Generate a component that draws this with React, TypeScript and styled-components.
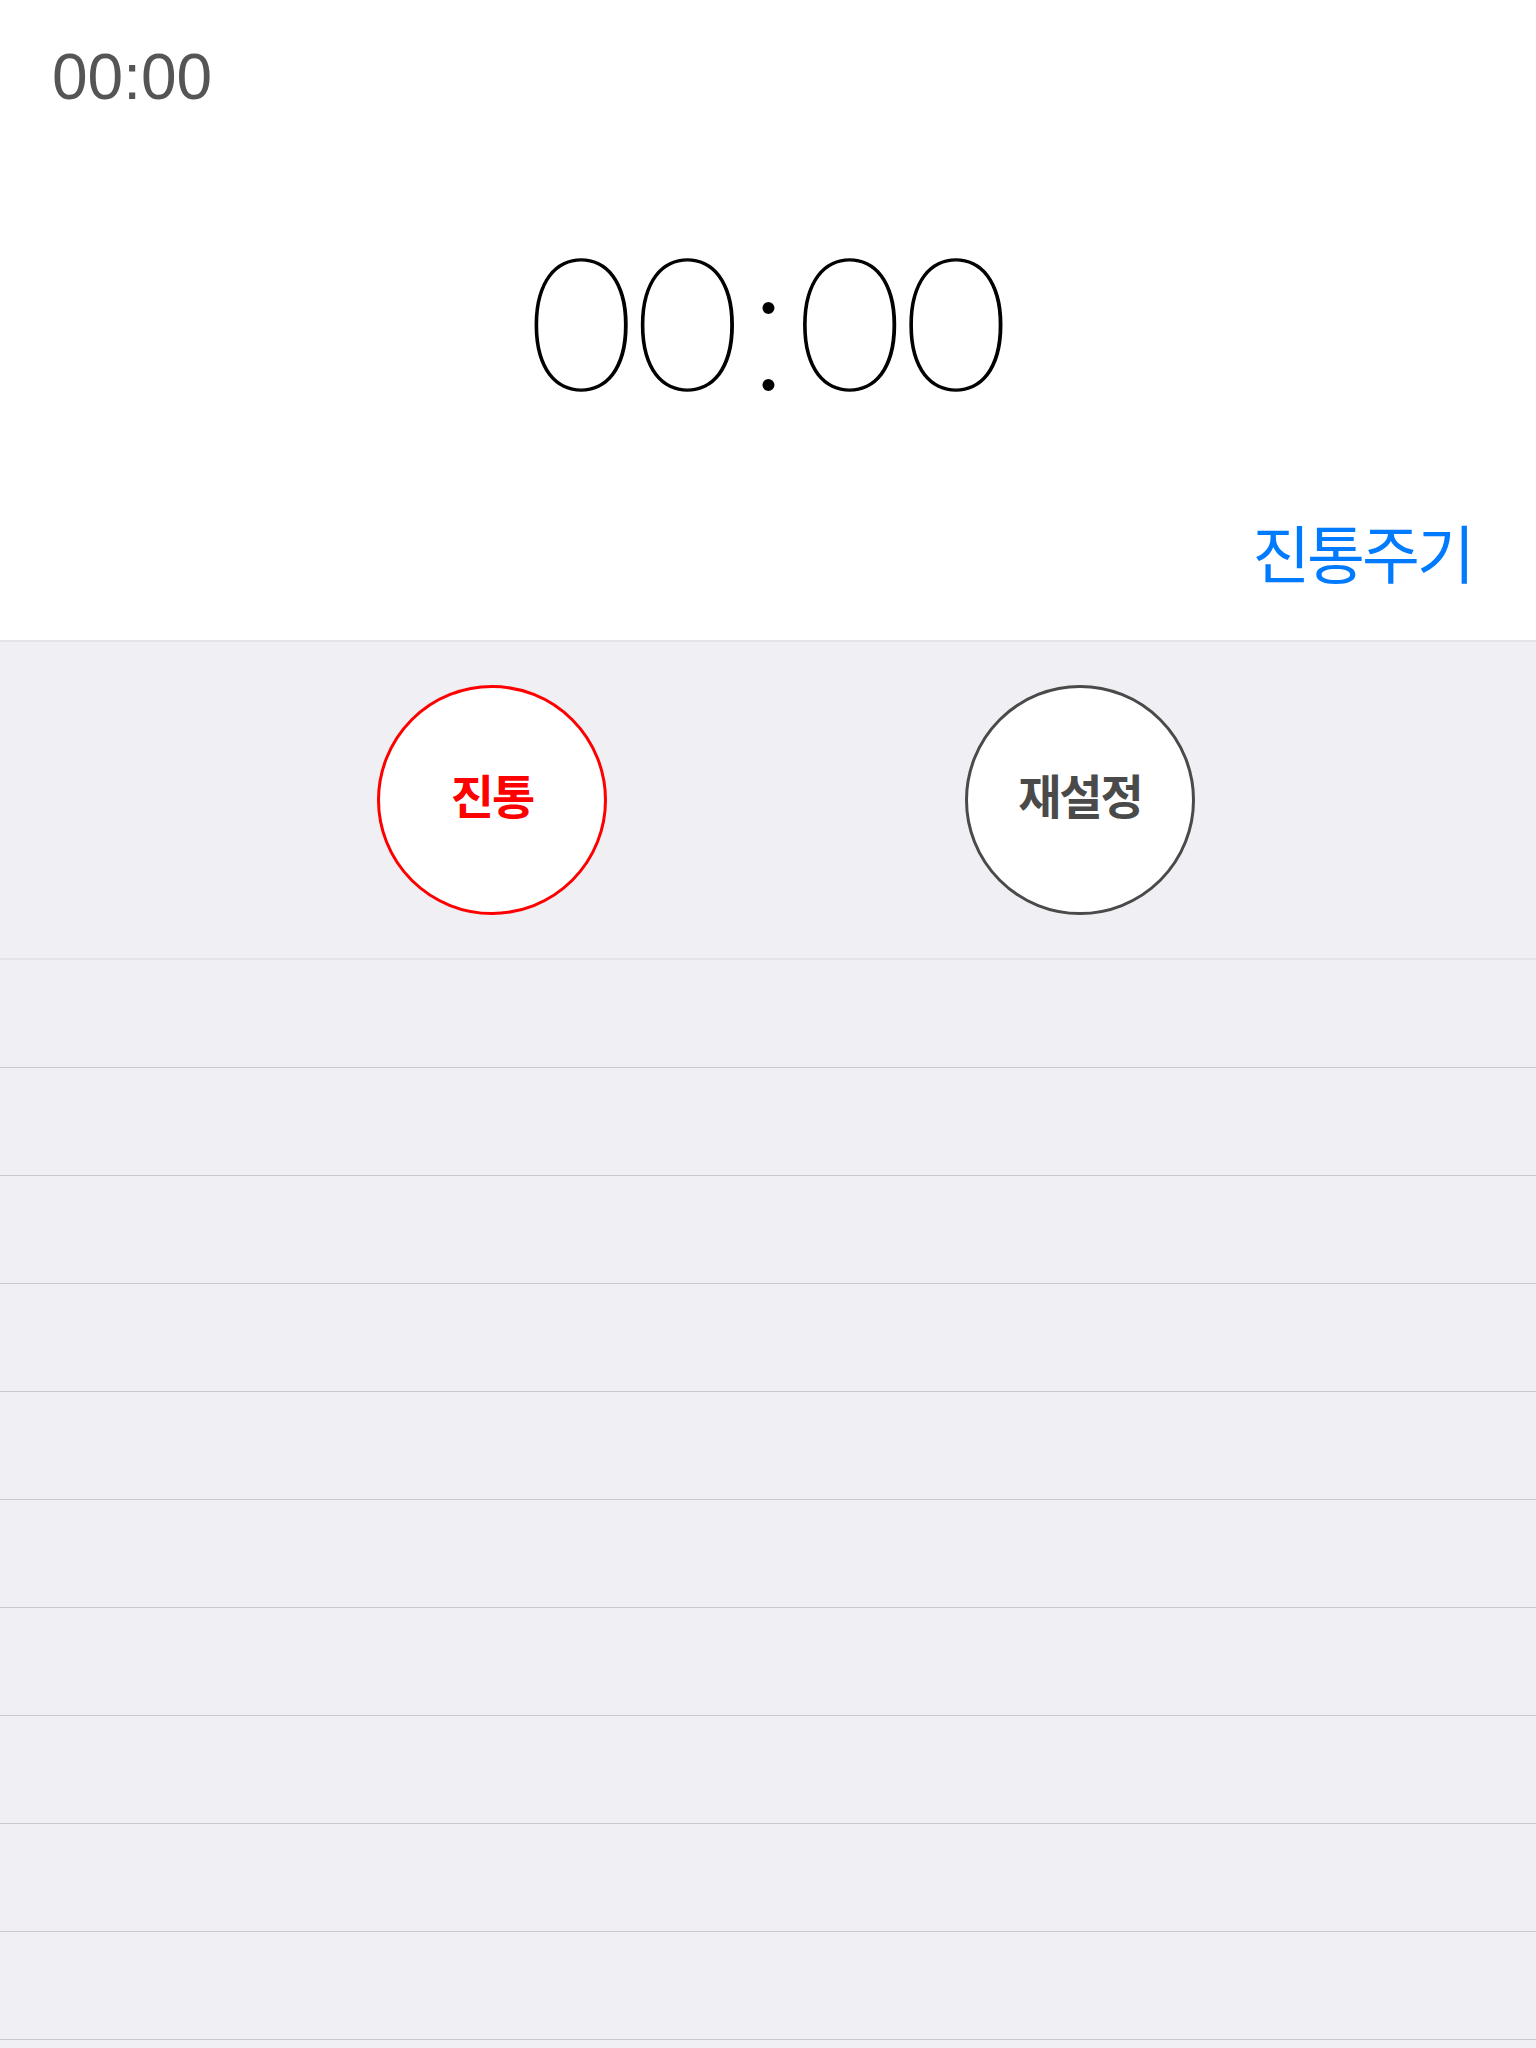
import React from "react";
import styled, { createGlobalStyle } from "styled-components";

const GlobalStyle = createGlobalStyle`
  html, body {
    margin: 0;
    padding: 0;
    background: #efeff4;
  }
  * { box-sizing: border-box; }
`;

const Page = styled.div`
  width: 1536px;
  min-height: 2048px;
  background: #efeff4;
  display: flex;
  flex-direction: column;
`;

const TopPanel = styled.section`
  height: 642px;
  background: #ffffff;
  border-bottom: 2px solid #e3e3e8;
  display: flex;
  flex-direction: column;
`;

const SmallClock = styled.div`
  padding: 45px 0 0 52px;
  font-family: "Liberation Sans", Arial, sans-serif;
  font-size: 64px;
  line-height: 64px;
  color: #555555;
`;

const BigClock = styled.div`
  margin-top: 117px;
  text-align: center;
  font-family: Lato, Roboto, "Liberation Sans", sans-serif;
  font-weight: 100;
  font-size: 185px;
  line-height: 185px;
  letter-spacing: -1px;
  color: #000000;
  -webkit-text-stroke: 1.4px #000000;
  font-variant-numeric: tabular-nums;
`;

const Colon = styled.span`
  margin: 0 7px;
  -webkit-text-stroke: 0;
`;

const LapLinkRow = styled.div`
  margin-top: auto;
  padding: 0 64px 58px 0;
  display: flex;
  justify-content: flex-end;
`;

const LapLink = styled.button`
  border: none;
  background: none;
  padding: 0;
  font-family: "Noto Sans CJK KR", sans-serif;
  font-size: 63px;
  line-height: 63px;
  letter-spacing: -3px;
  color: #007aff;
`;

const ButtonBar = styled.div`
  height: 318px;
  display: flex;
  align-items: center;
  padding-left: 377px;
  gap: 358px;
  border-bottom: 2px solid #e3e3e8;
`;

const CircleButton = styled.button<{ $tone: "red" | "gray" }>`
  width: 230px;
  height: 230px;
  border-radius: 50%;
  background: #ffffff;
  border: 3px solid ${(p) => (p.$tone === "red" ? "#ff0000" : "#4a4a4a")};
  color: ${(p) => (p.$tone === "red" ? "#ff0000" : "#4a4a4a")};
  font-family: "Noto Sans CJK KR", sans-serif;
  font-weight: 700;
  font-size: 47px;
  line-height: 47px;
  letter-spacing: -2px;
  display: flex;
  align-items: center;
  justify-content: center;
  padding: 0 0 14px 0;
`;

const LapRow = styled.div`
  height: 108px;
  border-bottom: 1px solid #c8c7cc;
`;

export default function App() {
  const rows = Array.from({ length: 10 }, (_, i) => i);
  return (
    <Page>
      <GlobalStyle />
      <TopPanel>
        <SmallClock>00:00</SmallClock>
        <BigClock>
          00<Colon>:</Colon>00
        </BigClock>
        <LapLinkRow>
          <LapLink>진통주기</LapLink>
        </LapLinkRow>
      </TopPanel>
      <ButtonBar>
        <CircleButton $tone="red">진통</CircleButton>
        <CircleButton $tone="gray">재설정</CircleButton>
      </ButtonBar>
      {rows.map((i) => (
        <LapRow key={i} />
      ))}
    </Page>
  );
}
